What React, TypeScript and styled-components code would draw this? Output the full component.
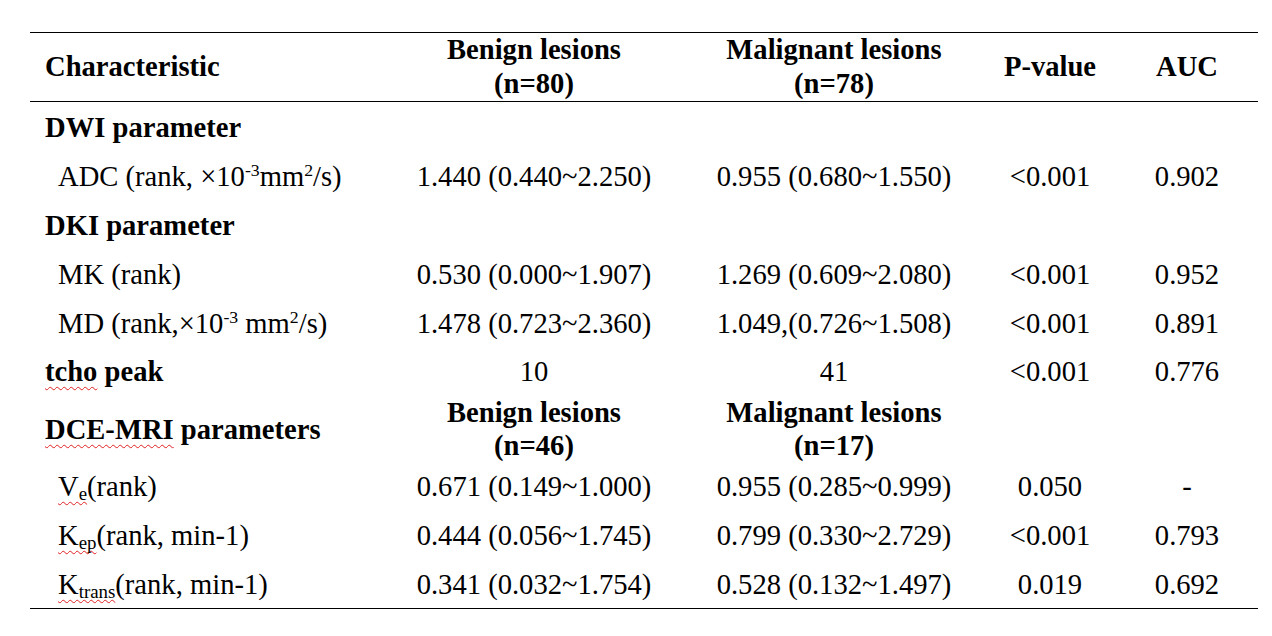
import React from 'react'
import styled, { createGlobalStyle } from 'styled-components'

const GlobalStyle = createGlobalStyle`
  html, body {
    margin: 0;
    padding: 0;
    background: #ffffff;
  }
  body {
    font-family: "Liberation Serif", "Times New Roman", serif;
    color: #000000;
  }
`

const Page = styled.div`
  width: 1272px;
  height: 636px;
  padding: 32px 0 0 30px;
  box-sizing: border-box;
`

const Table = styled.table`
  width: 1228px;
  border-collapse: collapse;
  table-layout: fixed;
  font-size: 28.6px;
  border-top: 1px solid #000;
  border-bottom: 1px solid #000;
`

const HeadRow = styled.tr`
  height: 68px;
  border-bottom: 1px solid #000;
  & > td {
    line-height: 34px;
  }
`

const Row = styled.tr<{ $h?: number }>`
  height: ${p => p.$h ?? 48.8}px;
`

const Spacer = styled.tr`
  height: 2px;
`

const Cell = styled.td<{ $bold?: boolean; $left?: boolean; $indent?: boolean }>`
  padding: 0;
  padding-left: ${p => (p.$left ? (p.$indent ? 28 : 15) : 0)}px;
  text-align: ${p => (p.$left ? 'left' : 'center')};
  font-weight: ${p => (p.$bold ? 700 : 400)};
  line-height: 33px;
  white-space: nowrap;
  vertical-align: middle;
`

const Sup = styled.sup`
  font-size: 0.62em;
  vertical-align: 0.55em;
  line-height: 0;
`

const Sub = styled.sub`
  font-size: 0.66em;
  vertical-align: -0.22em;
  line-height: 0;
`

const Spell = styled.span`
  text-decoration: underline wavy #e02020;
  text-decoration-thickness: 1px;
  text-underline-offset: 5px;
  text-decoration-skip-ink: none;
`

interface DataRow {
  label: React.ReactNode
  benign: string
  malignant: string
  p: string
  auc: string
}

const dwi: DataRow[] = [
  {
    label: <>ADC (rank, ×10<Sup>-3</Sup>mm<Sup>2</Sup>/s)</>,
    benign: '1.440 (0.440~2.250)',
    malignant: '0.955 (0.680~1.550)',
    p: '<0.001',
    auc: '0.902',
  },
]

const dki: DataRow[] = [
  {
    label: 'MK (rank)',
    benign: '0.530 (0.000~1.907)',
    malignant: '1.269 (0.609~2.080)',
    p: '<0.001',
    auc: '0.952',
  },
  {
    label: <>MD (rank,×10<Sup>-3</Sup> mm<Sup>2</Sup>/s)</>,
    benign: '1.478 (0.723~2.360)',
    malignant: '1.049,(0.726~1.508)',
    p: '<0.001',
    auc: '0.891',
  },
]

const dce: DataRow[] = [
  {
    label: <><Spell>V<Sub>e</Sub></Spell>(rank)</>,
    benign: '0.671 (0.149~1.000)',
    malignant: '0.955 (0.285~0.999)',
    p: '0.050',
    auc: '-',
  },
  {
    label: <><Spell>K<Sub>ep</Sub></Spell>(rank, min-1)</>,
    benign: '0.444 (0.056~1.745)',
    malignant: '0.799 (0.330~2.729)',
    p: '<0.001',
    auc: '0.793',
  },
  {
    label: <><Spell>K<Sub>trans</Sub></Spell>(rank, min-1)</>,
    benign: '0.341 (0.032~1.754)',
    malignant: '0.528 (0.132~1.497)',
    p: '0.019',
    auc: '0.692',
  },
]

const Item = ({ row }: { row: DataRow }) => (
  <Row>
    <Cell $left $indent>{row.label}</Cell>
    <Cell>{row.benign}</Cell>
    <Cell>{row.malignant}</Cell>
    <Cell>{row.p}</Cell>
    <Cell>{row.auc}</Cell>
  </Row>
)

const Section = ({ title }: { title: React.ReactNode }) => (
  <Row>
    <Cell $left $bold colSpan={5}>{title}</Cell>
  </Row>
)

export default function App() {
  return (
    <Page>
      <GlobalStyle />
      <Table>
        <colgroup>
          <col style={{ width: 354 }} />
          <col style={{ width: 300 }} />
          <col style={{ width: 300 }} />
          <col style={{ width: 132 }} />
          <col style={{ width: 142 }} />
        </colgroup>
        <thead>
          <HeadRow>
            <Cell $left $bold>Characteristic</Cell>
            <Cell $bold>Benign lesions<br />(n=80)</Cell>
            <Cell $bold>Malignant lesions<br />(n=78)</Cell>
            <Cell $bold>P-value</Cell>
            <Cell $bold>AUC</Cell>
          </HeadRow>
        </thead>
        <tbody>
          <Spacer />
          <Section title='DWI parameter' />
          {dwi.map((r, i) => <Item key={i} row={r} />)}
          <Section title='DKI parameter' />
          {dki.map((r, i) => <Item key={i} row={r} />)}
          <Row>
            <Cell $left $bold><Spell>tcho</Spell> peak</Cell>
            <Cell>10</Cell>
            <Cell>41</Cell>
            <Cell>&lt;0.001</Cell>
            <Cell>0.776</Cell>
          </Row>
          <Row $h={65}>
            <Cell $left $bold><Spell>DCE-MRI</Spell> parameters</Cell>
            <Cell $bold>Benign lesions<br />(n=46)</Cell>
            <Cell $bold>Malignant lesions<br />(n=17)</Cell>
            <Cell />
            <Cell />
          </Row>
          {dce.map((r, i) => <Item key={i} row={r} />)}
        </tbody>
      </Table>
    </Page>
  )
}
